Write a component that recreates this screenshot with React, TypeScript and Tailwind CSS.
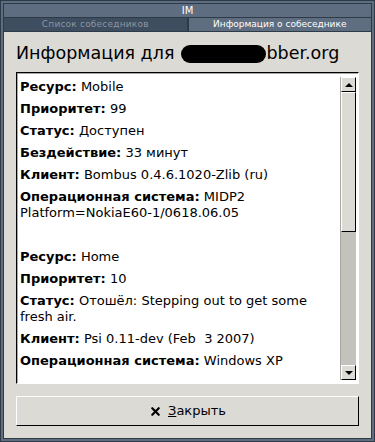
import { X } from 'lucide-react';

type Field = { label: string; value: string };

const resources: Field[][] = [
  [
    { label: 'Ресурс:', value: 'Mobile' },
    { label: 'Приоритет:', value: '99' },
    { label: 'Статус:', value: 'Доступен' },
    { label: 'Бездействие:', value: '33 минут' },
    { label: 'Клиент:', value: 'Bombus 0.4.6.1020-Zlib (ru)' },
    { label: 'Операционная система:', value: 'MIDP2 Platform=NokiaE60-1/0618.06.05' },
  ],
  [
    { label: 'Ресурс:', value: 'Home' },
    { label: 'Приоритет:', value: '10' },
    { label: 'Статус:', value: 'Отошёл: Stepping out to get some fresh air.' },
    { label: 'Клиент:', value: 'Psi 0.11-dev (Feb\u00a0 3 2007)' },
    { label: 'Операционная система:', value: 'Windows XP' },
  ],
];

function Scrollbar() {
  return (
    <div className="w-[16px] flex flex-col bg-[#c4c2bd] border-l border-[#a9a7a2]">
      {/* Кнопка вверх */}
      <div className="h-[15px] bg-[#dcdad5] border-t border-l border-white border-r border-b border-r-black border-b-black flex items-center justify-center">
        <div className="w-0 h-0 border-l-[4px] border-r-[4px] border-b-[4px] border-l-transparent border-r-transparent border-b-black" />
      </div>
      {/* Ползунок */}
      <div className="h-[140px] bg-[#dcdad5] border-t border-l border-white border-r border-b border-r-black border-b-black" />
      <div className="flex-1" />
      {/* Кнопка вниз */}
      <div className="h-[15px] bg-[#dcdad5] border-t border-l border-white border-r border-b border-r-black border-b-black flex items-center justify-center">
        <div className="w-0 h-0 border-l-[4px] border-r-[4px] border-t-[4px] border-l-transparent border-r-transparent border-t-black" />
      </div>
    </div>
  );
}

export default function App() {
  return (
    <div
      className="w-[375px] h-[442px] bg-[#2f3a48] p-px overflow-hidden"
      style={{ fontFamily: '"DejaVu Sans", sans-serif' }}
    >
      <div className="w-full h-full bg-[#5e6d80] p-[2px] flex flex-col">
        <div className="flex-1 flex flex-col border border-[#2f3a48] bg-[#2f3a48] gap-px">
          {/* Заголовок окна */}
          <div className="h-[13px] bg-[#5e6d80] flex items-center justify-center text-[10px] leading-none text-white">
            IM
          </div>
          {/* Вкладки */}
          <div className="h-[13px] flex gap-[2px] text-[9px] leading-none">
            <div className="flex-1 bg-[#3e4d5f] text-[#8a96a3] flex items-center justify-center tracking-[0.2px]">
              Список собеседников
            </div>
            <div className="flex-1 bg-[#5e6d80] text-white flex items-center justify-center">
              Информация о собеседнике
            </div>
          </div>
          {/* Содержимое */}
          <div className="flex-1 bg-[#dcdad5] px-[12px] pt-[11px] pb-[10px] flex flex-col">
            <div className="flex items-center h-[22px] text-[17.5px] leading-none text-black">
              <span>Информация для</span>
              <span className="inline-block ml-[7px] w-[85px] h-[18px] bg-black rounded-full" />
              <span>bber.org</span>
            </div>
            <div className="mt-[7px] h-[312px] flex border-t border-l border-black border-r border-b border-r-white border-b-white">
              <div className="flex-1 flex bg-white border-t border-l border-[#aaa8a3] p-[3px] pl-[1px] pr-[2px]">
                <div className="flex-1 overflow-hidden px-[1px] pt-[2px] text-[13px] leading-[16px] text-black">
                  {resources.map((fields, i) => (
                    <div key={i} className={i > 0 ? 'mt-[28px]' : ''}>
                      {fields.map((f, j) => (
                        <p key={j} className="mb-[6px]">
                          <span className="font-bold">{f.label}</span> {f.value}
                        </p>
                      ))}
                    </div>
                  ))}
                </div>
                <Scrollbar />
              </div>
            </div>
            {/* Кнопка закрытия */}
            <button className="mt-[12px] h-[30px] bg-[#dcdad5] border-t border-l border-white border-r border-b border-r-black border-b-black flex items-center justify-center gap-[6px] text-[13px] text-black">
              <X className="w-[13px] h-[13px]" strokeWidth={4} />
              <span>
                <span className="underline">З</span>акрыть
              </span>
            </button>
          </div>
        </div>
      </div>
    </div>
  );
}
